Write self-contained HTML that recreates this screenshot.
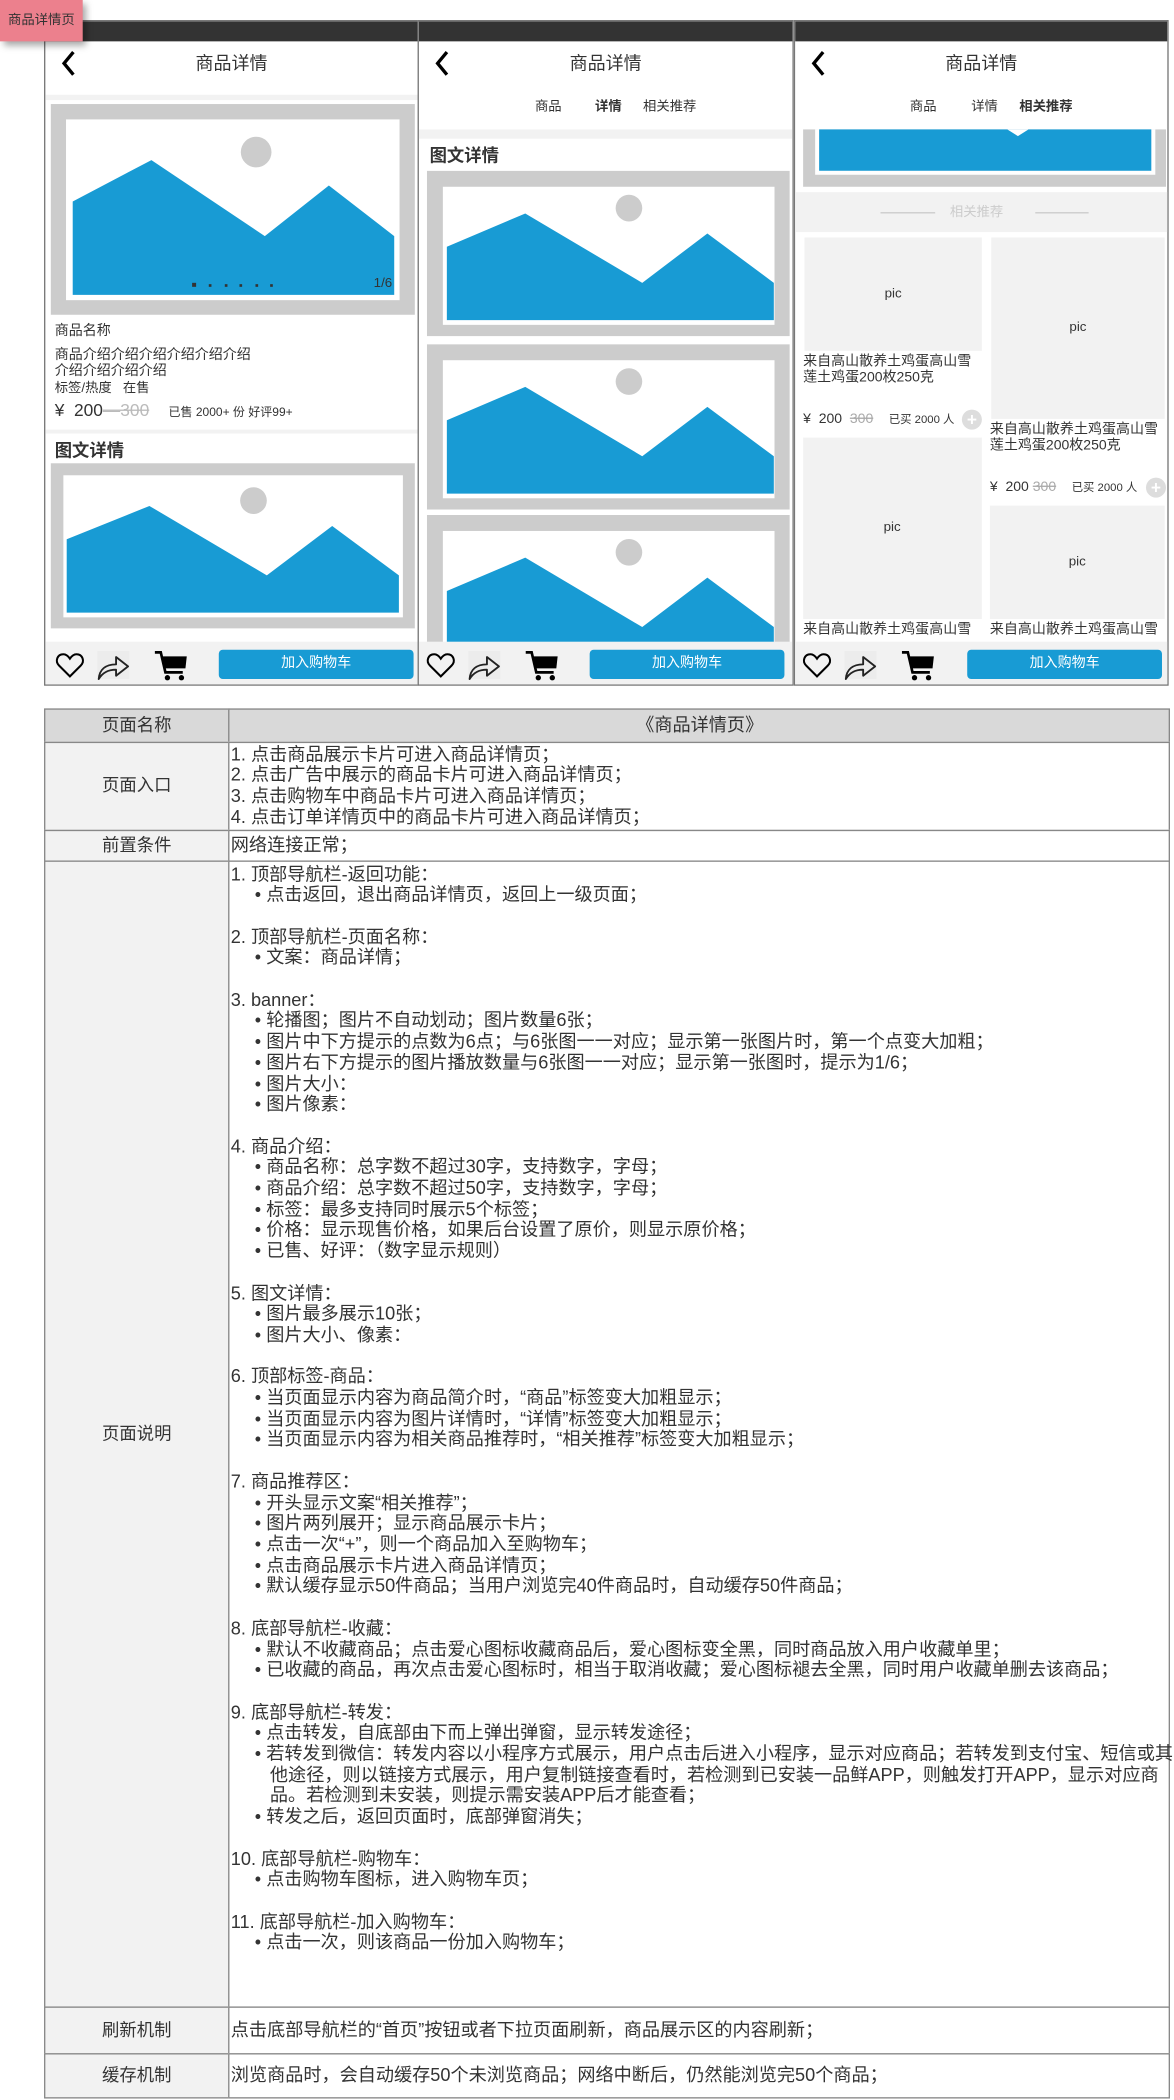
<!DOCTYPE html>
<html><head><meta charset="utf-8"><style>
*{margin:0;padding:0;box-sizing:border-box}
html,body{width:1174px;height:2100px;overflow:hidden;background:#fff}
#w{position:absolute;left:0;top:0;width:880px;height:1574px;transform:scale(1.33409);transform-origin:0 0;font-family:"Liberation Sans","Noto Sans CJK SC",sans-serif;color:#333}
.a{position:absolute}
.p{position:absolute;top:15px;height:499px;border:1px solid #777;overflow:hidden;background:#fff}
.bar{position:absolute;left:0;top:0;right:0;height:15px;background:#333}
.ttl{position:absolute;left:0;right:0;top:23px;text-align:center;font-size:13.5px;line-height:18px;color:#333}
.t{position:absolute;white-space:nowrap;line-height:12px}
.bb{position:absolute;left:0;right:0;top:465px;bottom:0;background:#f2f2f2}
.btn{position:absolute;left:130px;top:6px;width:146px;height:21.5px;background:#189bd4;border-radius:3px;color:#fff;font-size:10.5px;text-align:center;line-height:21.5px}
.pic{position:absolute;background:#f2f2f2;font-size:10px;display:flex;align-items:center;justify-content:center}
.plus{position:absolute;width:15px;height:15px;border-radius:50%;background:#ddd;color:#fff;font-size:13px;font-weight:bold;text-align:center;line-height:15px}
.tab{position:absolute;top:59px;font-size:10px;line-height:12px;transform:translateX(-50%);white-space:nowrap}
.cell{position:absolute;border:1px solid #888;font-size:13.6px;line-height:15.7px;white-space:nowrap}
.lc{background:#f2f2f2;display:flex;align-items:center;justify-content:center;left:33px;width:139px;font-size:13px}
.rc{left:171px;width:706px;background:#fff;padding-left:1px}
.b{padding-left:18px}
</style></head><body><div id="w">

<div class="a" style="left:0;top:0;width:62px;height:31px;background:#ec808d;box-shadow:3px 3px 5px rgba(0,0,0,.35);font-size:10px;line-height:31px;text-align:center;z-index:5">商品详情页</div>

<!-- Panel 1 -->
<div class="p" style="left:33px;width:281px">
<div class="bar"></div>
<svg class="a" style="left:0;top:0" width="30" height="50"><path d="M21 23 L14 31.5 L21 40" fill="none" stroke="#000" stroke-width="2.5"/></svg>
<div class="ttl">商品详情</div>
<div class="a" style="left:0;right:0;top:55px;height:4px;background:#f2f2f2"></div>
<svg class="a" style="left:4px;top:61.5px" width="273" height="158" viewBox="0 0 273 158"><rect width="273" height="158" fill="#ccc"/><rect x="11.5" y="11.5" width="250" height="135.5" fill="#fff"/><circle cx="154" cy="36" r="11.5" fill="#ccc"/><polygon points="16.5,73 75.5,42 160.5,99 208.5,61 257.5,99 257.5,143 16.5,143" fill="#189bd4"/>
<rect x="106" y="134" width="3" height="3" fill="#333"/><rect x="118.5" y="135" width="2" height="2" fill="#333"/><rect x="130.5" y="135" width="2" height="2" fill="#333"/><rect x="141.5" y="135" width="2" height="2" fill="#333"/><rect x="153.5" y="135" width="2" height="2" fill="#333"/><rect x="164.5" y="135" width="2" height="2" fill="#333"/>
<text x="256" y="137" font-size="10" text-anchor="end" fill="#333" font-family="Liberation Sans">1/6</text></svg>
<div class="t" style="left:7px;top:226px;font-size:10.5px">商品名称</div>
<div class="t" style="left:7px;top:244px;font-size:10.5px;line-height:12px">商品介绍介绍介绍介绍介绍介绍<br>介绍介绍介绍介绍</div>
<div class="t" style="left:7px;top:270px;font-size:10px">标签/热度&nbsp;&nbsp;&nbsp;在售</div>
<div class="t" style="left:7px;top:285px;font-size:13px;line-height:14px">¥&nbsp;&nbsp;200<span style="color:#bbb;text-decoration:line-through">—300</span>&nbsp;&nbsp;&nbsp;&nbsp;<span style="font-size:9px">已售 2000+ 份 好评99+</span></div>
<div class="a" style="left:0;right:0;top:306px;height:3px;background:#f2f2f2"></div>
<div class="t" style="left:7px;top:314px;font-size:13px;line-height:16px;font-weight:bold">图文详情</div>
<svg class="a" style="left:4px;top:330.5px" width="273" height="124.5" viewBox="0 0 273 124"><rect width="273" height="124" fill="#ccc"/><rect x="9.5" y="9" width="254.5" height="106.5" fill="#fff"/><circle cx="152" cy="28" r="10" fill="#ccc"/><polygon points="12,57 74,32 162,84 211,47 261,84 261,112 12,112" fill="#189bd4"/></svg>
<div class="bb">
<svg class="a" style="left:7px;top:7px" width="24" height="22"><path d="M12 20 L3.5 11.5 C0 8 2 2.5 6.8 2.5 C9.5 2.5 11 4.5 12 6 C13 4.5 14.5 2.5 17.2 2.5 C22 2.5 24 8 20.5 11.5 Z" fill="none" stroke="#000" stroke-width="1.6" transform="scale(0.95)"/></svg>
<div class="a" style="left:39px;top:7px;width:24px;height:21px;background:#ececec"></div>
<svg class="a" style="left:39px;top:7px" width="26" height="22"><path d="M1 21 C1.5 14 6 10 14 10 L14 4.5 L23 11.5 L14 18.5 L14 14 C8 14 4 16 1 21 Z" fill="none" stroke="#222" stroke-width="1.4" stroke-linejoin="round"/></svg>
<svg class="a" style="left:82px;top:6px" width="26" height="24"><path d="M0 2 H4.5 L8 17 H21" fill="none" stroke="#000" stroke-width="2"/><polygon points="6,5 24,5 23,14 8,14" fill="#000"/><circle cx="9.5" cy="21" r="2" fill="#000"/><circle cx="20" cy="21" r="2" fill="#000"/></svg>
<div class="btn">加入购物车</div>
</div>
</div>

<!-- Panel 2 -->
<div class="p" style="left:313px;width:282px">
<div class="bar"></div>
<svg class="a" style="left:0;top:0" width="30" height="50"><path d="M21 23 L14 31.5 L21 40" fill="none" stroke="#000" stroke-width="2.5"/></svg>
<div class="ttl">商品详情</div>
<div class="tab" style="left:97px">商品</div>
<div class="tab" style="left:142px;font-weight:bold">详情</div>
<div class="tab" style="left:188px">相关推荐</div>
<div class="a" style="left:0;right:0;top:81px;height:7px;background:#f2f2f2"></div>
<div class="t" style="left:8px;top:93px;font-size:13px;line-height:16px;font-weight:bold">图文详情</div>
<svg class="a" style="left:5.5px;top:111.5px" width="272" height="124" viewBox="0 0 273 124" preserveAspectRatio="none"><rect width="273" height="124" fill="#ccc"/><rect x="12" y="12" width="249.5" height="103.5" fill="#fff"/><circle cx="152" cy="28" r="10" fill="#ccc"/><polygon points="15,57 74,32 162,84 211,47 261,84 261,112 15,112" fill="#189bd4"/></svg>
<svg class="a" style="left:5.5px;top:241.5px" width="272" height="124" viewBox="0 0 273 124" preserveAspectRatio="none"><rect width="273" height="124" fill="#ccc"/><rect x="12" y="12" width="249.5" height="103.5" fill="#fff"/><circle cx="152" cy="28" r="10" fill="#ccc"/><polygon points="15,57 74,32 162,84 211,47 261,84 261,112 15,112" fill="#189bd4"/></svg>
<svg class="a" style="left:5.5px;top:370px" width="272" height="124" viewBox="0 0 273 124" preserveAspectRatio="none"><rect width="273" height="124" fill="#ccc"/><rect x="12" y="12" width="249.5" height="103.5" fill="#fff"/><circle cx="152" cy="28" r="10" fill="#ccc"/><polygon points="15,57 74,32 162,84 211,47 261,84 261,112 15,112" fill="#189bd4"/></svg>
<div class="bb">
<svg class="a" style="left:5px;top:7px" width="24" height="22"><path d="M12 20 L3.5 11.5 C0 8 2 2.5 6.8 2.5 C9.5 2.5 11 4.5 12 6 C13 4.5 14.5 2.5 17.2 2.5 C22 2.5 24 8 20.5 11.5 Z" fill="none" stroke="#000" stroke-width="1.6" transform="scale(0.95)"/></svg>
<div class="a" style="left:37px;top:7px;width:24px;height:21px;background:#ececec"></div>
<svg class="a" style="left:37px;top:7px" width="26" height="22"><path d="M1 21 C1.5 14 6 10 14 10 L14 4.5 L23 11.5 L14 18.5 L14 14 C8 14 4 16 1 21 Z" fill="none" stroke="#222" stroke-width="1.4" stroke-linejoin="round"/></svg>
<svg class="a" style="left:80px;top:6px" width="26" height="24"><path d="M0 2 H4.5 L8 17 H21" fill="none" stroke="#000" stroke-width="2"/><polygon points="6,5 24,5 23,14 8,14" fill="#000"/><circle cx="9.5" cy="21" r="2" fill="#000"/><circle cx="20" cy="21" r="2" fill="#000"/></svg>
<div class="btn" style="left:128px">加入购物车</div>
</div>
</div>

<!-- Panel 3 -->
<div class="p" style="left:595px;width:281px">
<div class="bar"></div>
<svg class="a" style="left:0;top:0" width="30" height="50"><path d="M21 23 L14 31.5 L21 40" fill="none" stroke="#000" stroke-width="2.5"/></svg>
<div class="ttl">商品详情</div>
<div class="tab" style="left:96px">商品</div>
<div class="tab" style="left:142px">详情</div>
<div class="tab" style="left:188px;font-weight:bold">相关推荐</div>
<div class="a" style="left:6px;top:81px;width:272px;height:43px;background:#ccc"></div>
<div class="a" style="left:15px;top:81px;width:255px;height:34px;background:#fff"></div>
<div class="a" style="left:18px;top:81px;width:249px;height:31px;background:#189bd4"></div>
<svg class="a" style="left:159px;top:81px" width="16" height="6"><polygon points="0,0 16,0 8,5" fill="#fff"/></svg>
<div class="a" style="left:0;right:0;top:127.5px;height:30.5px;background:#f2f2f2"></div>
<div class="a" style="left:64px;top:143px;width:41px;height:1px;background:#ccc"></div>
<div class="a" style="left:180px;top:143px;width:40px;height:1px;background:#ccc"></div>
<div class="t" style="left:136px;top:138px;font-size:10px;color:#ccc;transform:translateX(-50%)">相关推荐</div>
<div class="pic" style="left:7px;top:162px;width:133px;height:84.5px">pic</div>
<div class="t" style="left:6px;top:249px;font-size:10.5px;line-height:12px">来自高山散养土鸡蛋高山雪<br>莲土鸡蛋200枚250克</div>
<div class="t" style="left:6px;top:292px;font-size:10.5px">¥&nbsp;&nbsp;200&nbsp;&nbsp;<span style="color:#aaa;text-decoration:line-through">300</span>&nbsp;&nbsp;&nbsp;&nbsp;<span style="font-size:8.5px">已买 2000 人</span></div>
<div class="plus" style="left:125px;top:291px">+</div>
<div class="pic" style="left:6px;top:312px;width:133.5px;height:135.5px">pic</div>
<div class="t" style="left:6px;top:450px;font-size:10.5px">来自高山散养土鸡蛋高山雪</div>
<div class="pic" style="left:147px;top:162px;width:130px;height:135.5px">pic</div>
<div class="t" style="left:146px;top:300px;font-size:10.5px;line-height:12px">来自高山散养土鸡蛋高山雪<br>莲土鸡蛋200枚250克</div>
<div class="t" style="left:146px;top:343px;font-size:10.5px">¥&nbsp;&nbsp;200&nbsp;<span style="color:#aaa;text-decoration:line-through">300</span>&nbsp;&nbsp;&nbsp;&nbsp;<span style="font-size:8.5px">已买 2000 人</span></div>
<div class="plus" style="left:263px;top:342px">+</div>
<div class="pic" style="left:146px;top:363px;width:131px;height:84.5px">pic</div>
<div class="t" style="left:146px;top:450px;font-size:10.5px">来自高山散养土鸡蛋高山雪</div>
<div class="bb">
<svg class="a" style="left:5px;top:7px" width="24" height="22"><path d="M12 20 L3.5 11.5 C0 8 2 2.5 6.8 2.5 C9.5 2.5 11 4.5 12 6 C13 4.5 14.5 2.5 17.2 2.5 C22 2.5 24 8 20.5 11.5 Z" fill="none" stroke="#000" stroke-width="1.6" transform="scale(0.95)"/></svg>
<div class="a" style="left:37px;top:7px;width:24px;height:21px;background:#ececec"></div>
<svg class="a" style="left:37px;top:7px" width="26" height="22"><path d="M1 21 C1.5 14 6 10 14 10 L14 4.5 L23 11.5 L14 18.5 L14 14 C8 14 4 16 1 21 Z" fill="none" stroke="#222" stroke-width="1.4" stroke-linejoin="round"/></svg>
<svg class="a" style="left:80px;top:6px" width="26" height="24"><path d="M0 2 H4.5 L8 17 H21" fill="none" stroke="#000" stroke-width="2"/><polygon points="6,5 24,5 23,14 8,14" fill="#000"/><circle cx="9.5" cy="21" r="2" fill="#000"/><circle cx="20" cy="21" r="2" fill="#000"/></svg>
<div class="btn" style="left:129px;width:146px">加入购物车</div>
</div>
</div>

<!-- Table -->
<div class="cell lc" style="top:530.5px;height:26px;background:#d9d9d9">页面名称</div>
<div class="cell rc" style="top:530.5px;height:26px;background:#d9d9d9;text-align:center;line-height:24px">《商品详情页》</div>

<div class="cell lc" style="top:555.5px;height:67px">页面入口</div>
<div class="cell rc" style="top:555.5px;height:67px;padding-top:1px">1. 点击商品展示卡片可进入商品详情页；<br>2. 点击广告中展示的商品卡片可进入商品详情页；<br>3. 点击购物车中商品卡片可进入商品详情页；<br>4. 点击订单详情页中的商品卡片可进入商品详情页；</div>

<div class="cell lc" style="top:621.5px;height:24px">前置条件</div>
<div class="cell rc" style="top:621.5px;height:24px;line-height:21px">网络连接正常；</div>

<div class="cell lc" style="top:644.5px;height:860px">页面说明</div>
<div class="cell rc" style="top:644.5px;height:860px;padding-top:2px">1. 顶部导航栏-返回功能：<br>
<div class="b">• 点击返回，退出商品详情页，返回上一级页面；</div><br>
2. 顶部导航栏-页面名称：<br>
<div class="b">• 文案：商品详情；</div><br>
3. banner：<br>
<div class="b">• 轮播图；图片不自动划动；图片数量6张；<br>• 图片中下方提示的点数为6点；与6张图一一对应；显示第一张图片时，第一个点变大加粗；<br>• 图片右下方提示的图片播放数量与6张图一一对应；显示第一张图时，提示为1/6；<br>• 图片大小：<br>• 图片像素：</div><br>
4. 商品介绍：<br>
<div class="b">• 商品名称：总字数不超过30字，支持数字，字母；<br>• 商品介绍：总字数不超过50字，支持数字，字母；<br>• 标签：最多支持同时展示5个标签；<br>• 价格：显示现售价格，如果后台设置了原价，则显示原价格；<br>• 已售、好评：（数字显示规则）</div><br>
5. 图文详情：<br>
<div class="b">• 图片最多展示10张；<br>• 图片大小、像素：</div><br>
6. 顶部标签-商品：<br>
<div class="b">• 当页面显示内容为商品简介时，“商品”标签变大加粗显示；<br>• 当页面显示内容为图片详情时，“详情”标签变大加粗显示；<br>• 当页面显示内容为相关商品推荐时，“相关推荐”标签变大加粗显示；</div><br>
7. 商品推荐区：<br>
<div class="b">• 开头显示文案“相关推荐”；<br>• 图片两列展开；显示商品展示卡片；<br>• 点击一次“+”，则一个商品加入至购物车；<br>• 点击商品展示卡片进入商品详情页；<br>• 默认缓存显示50件商品；当用户浏览完40件商品时，自动缓存50件商品；</div><br>
8. 底部导航栏-收藏：<br>
<div class="b">• 默认不收藏商品；点击爱心图标收藏商品后，爱心图标变全黑，同时商品放入用户收藏单里；<br>• 已收藏的商品，再次点击爱心图标时，相当于取消收藏；爱心图标褪去全黑，同时用户收藏单删去该商品；</div><br>
9. 底部导航栏-转发：<br>
<div class="b">• 点击转发，自底部由下而上弹出弹窗，显示转发途径；<br>• 若转发到微信：转发内容以小程序方式展示，用户点击后进入小程序，显示对应商品；若转发到支付宝、短信或其<br>&nbsp;&nbsp;&nbsp;他途径，则以链接方式展示，用户复制链接查看时，若检测到已安装一品鲜APP，则触发打开APP，显示对应商<br>&nbsp;&nbsp;&nbsp;品。若检测到未安装，则提示需安装APP后才能查看；<br>• 转发之后，返回页面时，底部弹窗消失；</div><br>
10. 底部导航栏-购物车：<br>
<div class="b">• 点击购物车图标，进入购物车页；</div><br>
11. 底部导航栏-加入购物车：<br>
<div class="b">• 点击一次，则该商品一份加入购物车；</div>
</div>

<div class="cell lc" style="top:1503.5px;height:36px">刷新机制</div>
<div class="cell rc" style="top:1503.5px;height:36px;line-height:33px">点击底部导航栏的“首页”按钮或者下拉页面刷新，商品展示区的内容刷新；</div>
<div class="cell lc" style="top:1538.5px;height:34px">缓存机制</div>
<div class="cell rc" style="top:1538.5px;height:34px;line-height:31px">浏览商品时，会自动缓存50个未浏览商品；网络中断后，仍然能浏览完50个商品；</div>

</div></body></html>
